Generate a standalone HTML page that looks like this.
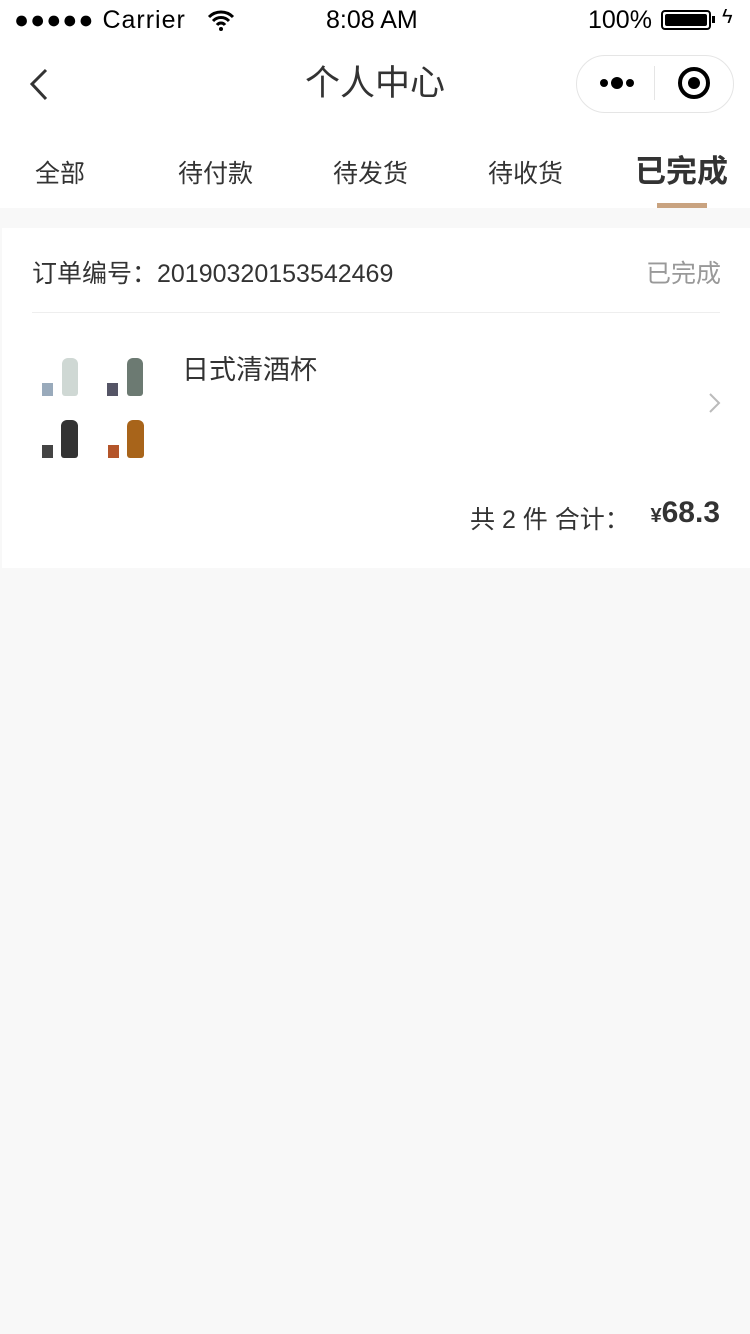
<!DOCTYPE html><html><head><meta charset="utf-8"><style>
body{margin:0;width:750px;height:1334px;background:#f8f8f8;font-family:"Liberation Sans","Noto Sans CJK SC",sans-serif;position:relative;overflow:hidden;color:#333}
.a{position:absolute}
</style></head><body>
<div class="a" style="left:0;top:0;width:750px;height:208px;background:#fff"></div>
<div class="a" style="left:14px;top:6px;font-size:25px;color:#000;letter-spacing:1px">●●●●● Carrier</div>
<svg class="a" style="left:206px;top:8px" width="30" height="24" viewBox="0 0 30 24"><path d="M3 9a17 17 0 0 1 24 0M7 13a11 11 0 0 1 16 0M11 17a5 5 0 0 1 8 0" stroke="#000" stroke-width="3" fill="none"/><circle cx="15" cy="21" r="2" fill="#000"/></svg>
<div class="a" style="left:326px;top:6px;font-size:25px;color:#000">8:08 AM</div>
<div class="a" style="left:588px;top:6px;font-size:25px;color:#000">100%</div>
<div class="a" style="left:661px;top:10px;width:50px;height:20px;border:2px solid #000;border-radius:4px;box-sizing:border-box;padding:2px"><div style="background:#000;height:100%;border-radius:2px"></div></div>
<div class="a" style="left:712px;top:16px;width:3px;height:7px;background:#000"></div>
<div class="a" style="left:722px;top:6px;font-size:20px;color:#000">ϟ</div>
<svg class="a" style="left:26px;top:68px" width="24" height="34"><path d="M20 2L6 16l14 15" stroke="#333" stroke-width="3" fill="none"/></svg>
<div class="a" style="left:0;width:750px;top:62px;text-align:center;font-size:35px;color:#333;line-height:44px">个人中心</div>
<div class="a" style="left:576px;top:55px;width:158px;height:58px;border:1.5px solid #e5e5e5;border-radius:30px;box-sizing:border-box"></div>
<div class="a" style="left:654px;top:66px;width:1px;height:34px;background:#e5e5e5"></div>
<div class="a" style="left:600px;top:79px;width:8px;height:8px;border-radius:50%;background:#000"></div>
<div class="a" style="left:611px;top:77px;width:12px;height:12px;border-radius:50%;background:#000"></div>
<div class="a" style="left:626px;top:79px;width:8px;height:8px;border-radius:50%;background:#000"></div>
<div class="a" style="left:678px;top:67px;width:32px;height:32px;border:4px solid #000;border-radius:50%;box-sizing:border-box"></div>
<div class="a" style="left:688px;top:77px;width:12px;height:12px;background:#000;border-radius:50%"></div>
<div class="a" style="left:35px;top:154px;font-size:25px;color:#333">全部</div>
<div class="a" style="left:178px;top:154px;font-size:25px;color:#333">待付款</div>
<div class="a" style="left:333px;top:154px;font-size:25px;color:#333">待发货</div>
<div class="a" style="left:488px;top:154px;font-size:25px;color:#333">待收货</div>
<div class="a" style="left:635px;top:146px;font-size:31px;font-weight:bold;color:#333">已完成</div>
<div class="a" style="left:657px;top:203px;width:50px;height:5px;background:#c9a380"></div>
<div class="a" style="left:2px;top:228px;width:748px;height:340px;background:#fff"></div>
<div class="a" style="left:32px;top:254px;font-size:25px;color:#333">订单编号：20190320153542469</div>
<div class="a" style="left:646px;top:254px;font-size:25px;color:#999">已完成</div>
<div class="a" style="left:32px;top:312px;width:688px;height:1px;background:#eee"></div>
<div class="a" style="left:62px;top:358px;width:16px;height:38px;background:#cfd8d4;border-radius:6px 6px 3px 3px"></div>
<div class="a" style="left:42px;top:383px;width:11px;height:13px;background:#9ab"></div>
<div class="a" style="left:127px;top:358px;width:16px;height:38px;background:#6c7a72;border-radius:6px 6px 3px 3px"></div>
<div class="a" style="left:107px;top:383px;width:11px;height:13px;background:#556"></div>
<div class="a" style="left:61px;top:420px;width:17px;height:38px;background:#333;border-radius:6px 6px 3px 3px"></div>
<div class="a" style="left:42px;top:445px;width:11px;height:13px;background:#444"></div>
<div class="a" style="left:127px;top:420px;width:17px;height:38px;background:#a8641a;border-radius:6px 6px 3px 3px"></div>
<div class="a" style="left:108px;top:445px;width:11px;height:13px;background:#b4552a"></div>
<div class="a" style="left:182px;top:348px;font-size:27px;color:#333">日式清酒杯</div>
<svg class="a" style="left:708px;top:392px" width="14" height="22"><path d="M2 2l9 9-9 9" stroke="#bbb" stroke-width="2" fill="none"/></svg>
<div class="a" style="left:470px;top:500px;font-size:25px;color:#333">共 2 件 合计：</div>
<div class="a" style="right:30px;top:496px;font-size:30px;font-weight:bold;color:#333"><span style="font-size:20px">¥</span>68.3</div>
</body></html>
